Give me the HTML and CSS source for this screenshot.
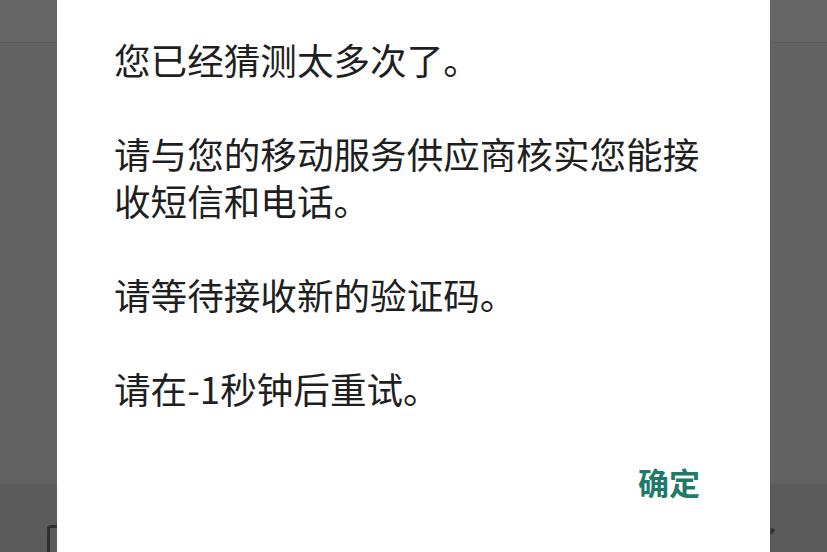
FILE: index.html
```html
<!DOCTYPE html>
<html lang="zh-CN">
<head>
<meta charset="utf-8">
<title>验证码</title>
<link rel="stylesheet" href="styles.css">
</head>
<body>
<div class="screen">
  <div class="appbar"></div>
  <div class="content"></div>
  <div class="footer">
    <div class="field"></div>
    <div class="mark"></div>
  </div>
</div>
<div class="dialog">
  <div class="message">
    <p>您已经猜测太多次了。</p>
    <p>请与您的移动服务供应商核实您能接收短信和电话。</p>
    <p>请等待接收新的验证码。</p>
    <p>请在-1秒钟后重试。</p>
  </div>
  <div class="actions">
    <span class="btn">确定</span>
  </div>
</div>
</body>
</html>
```
FILE: styles.css
```css
html, body {
  margin: 0;
  padding: 0;
  width: 827px;
  height: 552px;
  overflow: hidden;
  background: #636363;
  font-family: "Noto Sans CJK SC", "Noto Sans", sans-serif;
}
.screen {
  display: flex;
  flex-direction: column;
  height: 552px;
}
.appbar {
  height: 42px;
  border-bottom: 1px solid #595959;
  background: #656565;
}
.content {
  flex: 1;
  background: #626262;
}
.footer {
  height: 68px;
  background: #5b5b5b;
  position: relative;
}
.field {
  position: absolute;
  left: 47px;
  top: 41px;
  width: 40px;
  height: 40px;
  border: 3px solid #2f2f2f;
  border-radius: 4px;
}
.mark {
  position: absolute;
  left: 770px;
  top: 44px;
  width: 4px;
  height: 6px;
  background: #333;
  transform: rotate(35deg);
}
.dialog {
  position: absolute;
  left: 57px;
  top: -20px;
  width: 713px;
  height: 590px;
  background: #ffffff;
  border-radius: 8px;
  box-sizing: border-box;
  padding: 56px 70px 0 57px;
  display: flex;
  flex-direction: column;
}
.message p {
  margin: 0 0 47px 0;
  font-size: 36.6px;
  line-height: 47px;
  color: #1f1f1f;
}
.message p:last-child {
  margin-bottom: 0;
}
.actions {
  display: flex;
  justify-content: flex-end;
  margin-top: 50px;
}
.btn {
  font-size: 31px;
  line-height: 40px;
  font-weight: 700;
  color: #1f7a69;
}
```
